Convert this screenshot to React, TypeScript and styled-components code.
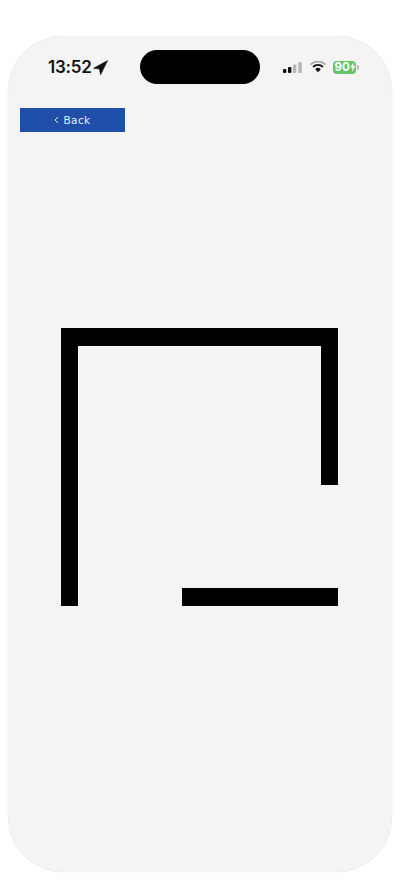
import React from "react";
import styled, { createGlobalStyle } from "styled-components";

const GlobalStyle = createGlobalStyle`
  html, body {
    margin: 0;
    padding: 0;
    background: #fff;
  }
`;

const Page = styled.div`
  width: 400px;
  height: 880px;
  padding: 36px 8px 8px;
  box-sizing: border-box;
`;

const Phone = styled.main`
  width: 384px;
  height: 836px;
  background: #f4f4f4;
  border-radius: 56px;
  box-shadow: 0 0 1px rgba(0, 0, 0, 0.22);
  display: flex;
  flex-direction: column;
  overflow: hidden;
`;

const StatusBar = styled.header`
  height: 48px;
  padding-top: 14px;
  box-sizing: border-box;
  display: grid;
  grid-template-columns: 132px 120px 132px;
`;

const TimeGroup = styled.div`
  display: flex;
  align-items: center;
  height: 34px;
  padding-left: 40px;
  gap: 1px;
`;

const Time = styled.span`
  font-family: Inter, "Liberation Sans", sans-serif;
  font-size: 17px;
  font-weight: 600;
  letter-spacing: -0.2px;
  color: #111;
`;

const Island = styled.div`
  height: 34px;
  background: #000;
  border-radius: 17px;
`;

const Indicators = styled.div`
  display: flex;
  align-items: center;
  height: 34px;
  padding-left: 23px;
  gap: 7px;
`;

const Battery = styled.div`
  width: 23px;
  height: 13px;
  border-radius: 4px;
  background: #65c466;
  color: #fff;
  font-family: Inter, "Liberation Sans", sans-serif;
  font-size: 11.5px;
  font-weight: 700;
  line-height: 13px;
  display: flex;
  align-items: center;
  padding-left: 1.5px;
  box-sizing: border-box;
  position: relative;

  svg {
    flex-shrink: 0;
  }

  &::after {
    content: "";
    position: absolute;
    right: -3px;
    top: 4px;
    width: 2px;
    height: 5px;
    border-radius: 0 2px 2px 0;
    background: #b9b9b9;
  }
`;

const BackButton = styled.button`
  width: 105px;
  height: 24px;
  margin: 24px 0 0 12px;
  padding: 0;
  border: none;
  background: #1f4fa8;
  color: #e8eefa;
  font-family: "DejaVu Sans", sans-serif;
  font-size: 10.5px;
  letter-spacing: 0.4px;
  display: flex;
  align-items: center;
  justify-content: center;
  gap: 4px;
`;

const Maze = styled.svg`
  display: block;
  width: 277px;
  height: 278px;
  margin: 196px 0 0 53px;
`;

const App: React.FC = () => {
  return (
    <>
      <GlobalStyle />
      <Page>
        <Phone>
          <StatusBar>
            <TimeGroup>
              <Time>13:52</Time>
              <svg width="15" height="15" viewBox="0 0 15 15">
                <path d="M14.6 .6 L.6 8.2 L6.4 9 L7.6 14.8 Z" fill="#111" stroke="#111" strokeWidth="0.6" strokeLinejoin="round" />
              </svg>
            </TimeGroup>
            <Island />
            <Indicators>
              <svg width="20" height="11" viewBox="0 0 20 11">
                <rect x="0" y="7" width="3.4" height="4" rx="1" fill="#111" />
                <rect x="5" y="5" width="3.4" height="6" rx="1" fill="#111" />
                <rect x="10" y="2.5" width="3.4" height="8.5" rx="1" fill="#b5b5b5" />
                <rect x="15.4" y="0" width="3.4" height="11" rx="1" fill="#b5b5b5" />
              </svg>
              <svg width="16" height="12" viewBox="0 0 16 12">
                <path d="M.6 3.6 A10.4 10.4 0 0 1 15.4 3.6" stroke="#a8a8a8" strokeWidth="1.7" fill="none" />
                <path d="M3.1 6 A6.9 6.9 0 0 1 12.9 6" stroke="#111" strokeWidth="1.8" fill="none" />
                <path d="M5.2 8.2 A4 4 0 0 1 10.8 8.2 L8 11.3 Z" fill="#111" />
              </svg>
              <Battery>
                90
                <svg width="6" height="10" viewBox="0 0 6 10">
                  <path d="M3.8 0 L.4 5.6 H2.6 L2 10 L5.6 4 H3.3 Z" fill="#fff" />
                </svg>
              </Battery>
            </Indicators>
          </StatusBar>
          <BackButton>
            <svg width="5" height="8" viewBox="0 0 5 8">
              <path d="M4 1 L1 4 L4 7" stroke="#e8eefa" strokeWidth="1" fill="none" />
            </svg>
            Back
          </BackButton>
          <Maze viewBox="0 0 277 278">
            <path d="M0 278 V0 H277 V157 H260 V18 H17 V278 Z M121 260 H277 V278 H121 Z" fill="#000" />
          </Maze>
        </Phone>
      </Page>
    </>
  );
};

export default App;
